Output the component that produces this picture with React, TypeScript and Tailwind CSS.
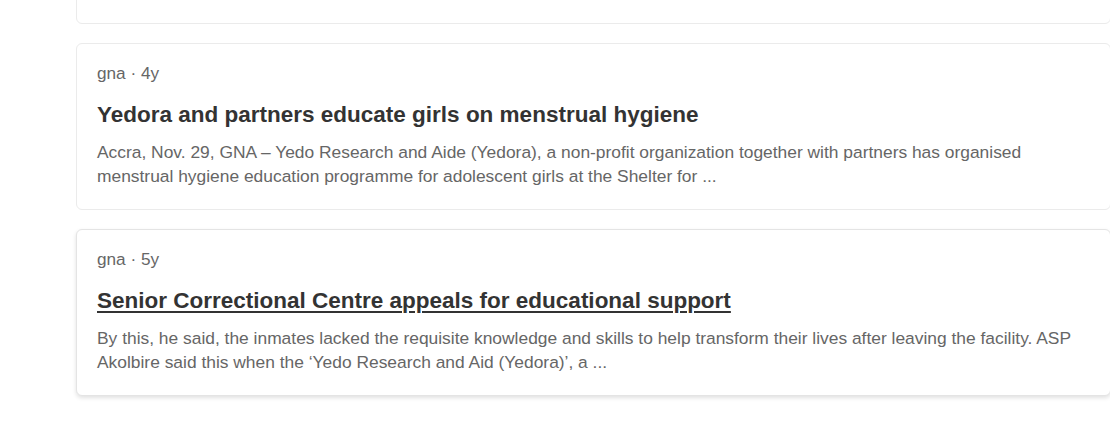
import React from 'react'

type Story = {
    source: string
    age: string
    title: string
    summary: string
    hovered?: boolean
}

const stories: Story[] = [
    {
        source: 'gna',
        age: '4y',
        title: 'Yedo Research and Aide supports girls in Tamale',
        summary: 'The organisation, with the support of its partners, presented sanitary pads and other items to the girls, urging them to stay in school and pursue their dreams, saying everything is possible. provide sanitary pads and support to young girls ...',
    },
    {
        source: 'gna',
        age: '4y',
        title: 'Yedora and partners educate girls on menstrual hygiene',
        summary: 'Accra, Nov. 29, GNA – Yedo Research and Aide (Yedora), a non-profit organization together with partners has organised menstrual hygiene education programme for adolescent girls at the Shelter for ...',
    },
    {
        source: 'gna',
        age: '5y',
        title: 'Senior Correctional Centre appeals for educational support',
        summary: 'By this, he said, the inmates lacked the requisite knowledge and skills to help transform their lives after leaving the facility. ASP Akolbire said this when the ‘Yedo Research and Aid (Yedora)’, a ...',
        hovered: true,
    },
]

function StoryCard({ story }: { story: Story }) {
    return (
        <div
            className={
                story.hovered
                    ? 'w-[1035px] shrink-0 rounded-md border border-[#e4e4e4] bg-white px-5 pt-[17px] pb-[21px] shadow-[0_2px_4px_rgba(0,0,0,0.12)]'
                    : 'w-[1035px] shrink-0 rounded-md border border-[#ebebeb] bg-white px-5 pt-[17px] pb-[21px]'
            }
        >
            <p className="text-[17.2px] leading-6 text-[#666]">
                {story.source} · {story.age}
            </p>
            <h3
                className={
                    story.hovered
                        ? 'mt-4 text-[22.5px] leading-7 font-bold text-[#333] underline decoration-2 underline-offset-[3px]'
                        : 'mt-4 text-[22.5px] leading-7 font-bold text-[#333]'
                }
            >
                {story.title}
            </h3>
            <p className="mt-[11px] text-[17.4px] leading-6 text-[#666]">{story.summary}</p>
        </div>
    )
}

export default function App() {
    return (
        <div className="w-full h-[425px] overflow-hidden bg-white font-['Liberation_Sans',Arial,sans-serif]">
            <div className="-mt-[143px] pl-[76px] flex flex-col gap-[19px]">
                {stories.map((s, i) => (
                    <StoryCard key={i} story={s} />
                ))}
            </div>
        </div>
    )
}
